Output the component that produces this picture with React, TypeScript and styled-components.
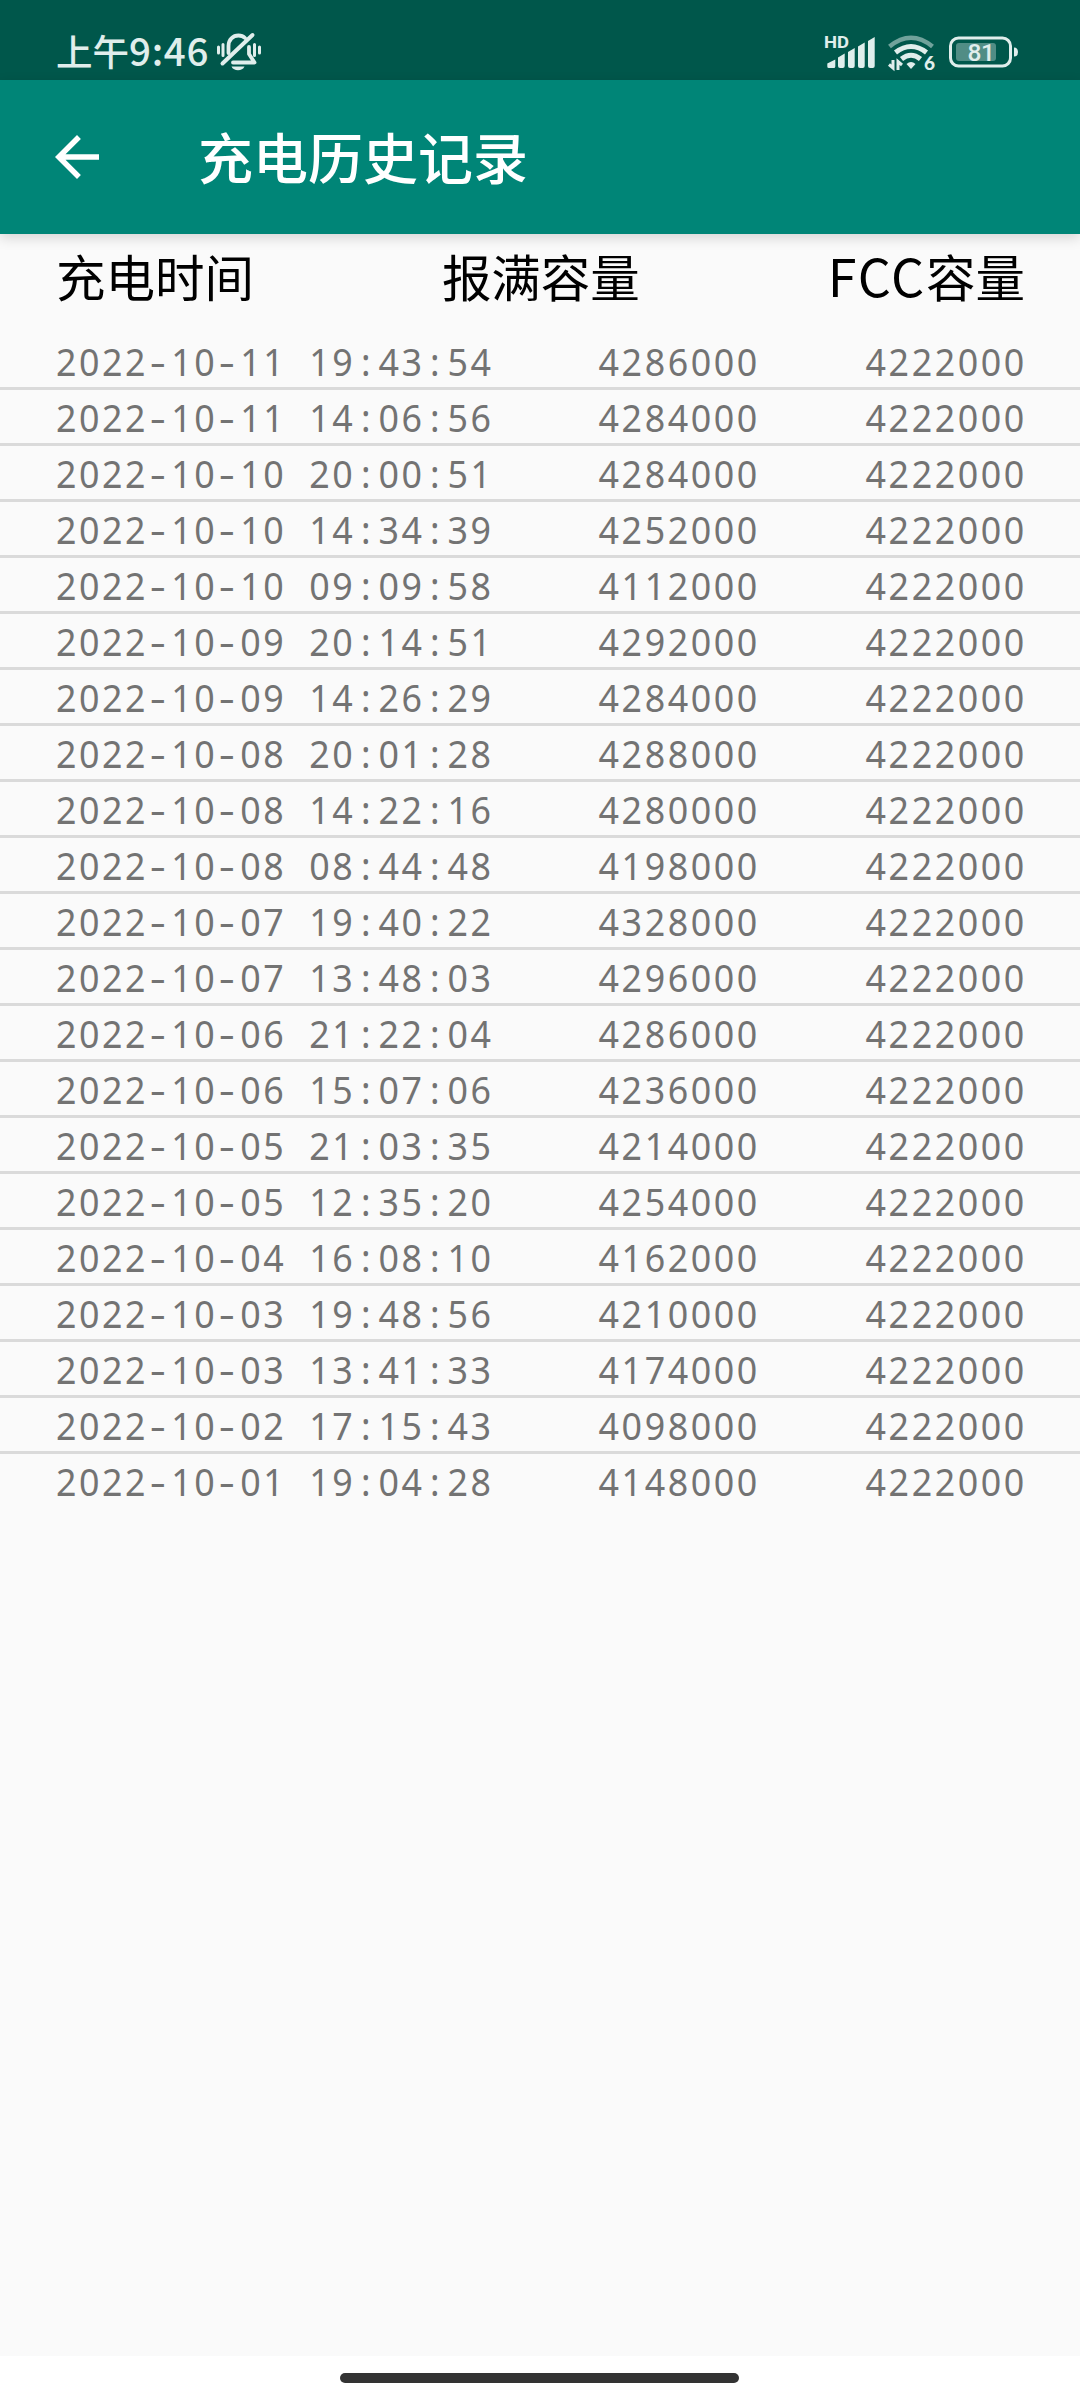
import React from 'react';
import styled, { createGlobalStyle } from 'styled-components';

const Global = createGlobalStyle`
  body { margin: 0; background: #fafafa; }
  * { box-sizing: border-box; }
`;

const cjk = `'Noto Sans CJK SC', sans-serif`;

const Screen = styled.div`
  width: 1080px;
  height: 2400px;
  display: flex;
  flex-direction: column;
  background: #fafafa;
  font-family: ${cjk};
  overflow: hidden;
`;

const StatusBar = styled.div`
  height: 80px;
  flex: none;
  padding: 22px 61px 0 56px;
  display: flex;
  justify-content: space-between;
  align-items: flex-start;
  background: #00574b;
  color: #e0eeec;

  svg { overflow: visible; }
`;

const StatusGroup = styled.div<{ $gap: number }>`
  display: flex;
  align-items: center;
  gap: ${(p) => p.$gap}px;
  height: 60px;
`;

const Clock = styled.span`
  width: 152px;
  font-size: 36.5px;
  line-height: 55px;
  height: 60px;
  font-weight: 500;
  white-space: nowrap;
`;

const ClockDigits = styled.span`
  font-size: 38.5px;
  letter-spacing: 0.7px;
`;

const Toolbar = styled.header`
  height: 154px;
  flex: none;
  display: flex;
  align-items: center;
  padding-left: 44px;
  background: #008577;
  color: #fff;
  box-shadow: 0 4px 12px rgba(0, 0, 0, 0.15);
  z-index: 1;
`;

const BackButton = styled.button`
  width: 66px;
  height: 66px;
  padding: 0;
  border: 0;
  background: none;
  color: inherit;
`;

const Title = styled.h1`
  margin: 0 0 5px 88px;
  font-size: 55px;
  font-weight: 500;
  line-height: 80px;
`;

const HeaderRow = styled.div`
  height: 100px;
  flex: none;
  display: flex;
  justify-content: space-between;
  padding: 5px 55px 0 56px;
  font-size: 49.5px;
  line-height: 74px;
  color: #000;
`;

const Latin = styled.span`
  font-size: 52px;
  line-height: 1;
  letter-spacing: 1.8px;
`;

const List = styled.main`
  flex: 1;
`;

const Row = styled.div`
  height: 56px;
  display: grid;
  grid-template-columns: minmax(0, 1fr) 266px 267px;
  padding: 0 55px 0 56px;
  border-bottom: 3px solid #dadada;
  font-family: 'Noto Sans', sans-serif;
  font-size: 38.5px;
  line-height: 54px;
  color: #737373;
  white-space: nowrap;
  &:last-child { border-bottom: 0; }
`;

const Cell = styled.div<{ $right?: boolean }>`
  text-align: ${(p) => (p.$right ? 'right' : 'left')};
  transform: scaleX(0.93);
  transform-origin: ${(p) => (p.$right ? 'right' : 'left')} center;
`;

const Digits = styled.span`
  letter-spacing: 2.74px;
`;

const LastDigit = styled.span`
  letter-spacing: 0.8px;
`;

const Mark = styled.span<{ $wide?: boolean }>`
  display: inline-block;
  width: 24.76px;
  padding-right: 2.5px;
  text-align: center;
  transform: ${(p) => (p.$wide ? 'scaleX(1.4)' : 'none')};
`;

const NavBar = styled.footer`
  height: 44px;
  flex: none;
  padding-top: 17px;
  background: #fff;
`;

const NavHandle = styled.div`
  width: 399px;
  height: 10px;
  margin: 0 0 0 340px;
  border-radius: 5px;
  background: #333;
`;

const MutedBell = () => (
  <svg width="46" height="40" viewBox="0 0 46 40" fill="none" stroke="currentColor" strokeLinecap="round">
    <path d="M2.500 15v6M7 12.500v11M38.500 12.500v11M43.500 15v6" strokeWidth="3" />
    <path d="M12.500 21V14C12.500 7.500 17 3.500 22.500 3.500C25 3.500 27.500 4.500 29 6M33 15v7l5.500 8.500H17" strokeWidth="3.800" strokeLinejoin="round" />
    <path d="M36.500 3L6.500 31.500" strokeWidth="4" />
    <path d="M15.500 34.500h13c-2 5-11 5-13 0z" fill="currentColor" stroke="none" />
  </svg>
);

const Signal = () => (
  <svg width="52" height="36" viewBox="0 0 52 36" fill="currentColor">
    <text x="1" y="13.500" fontFamily="Roboto, sans-serif" fontWeight="700" fontSize="16" textLength="25" lengthAdjust="spacingAndGlyphs">HD</text>
    <path d="M4.300 29.500l8-4v7a1.500 1.500 0 0 1-1.500 1.500h-5a1.500 1.500 0 0 1-1.500-1.500zM15 23.500l6.700-4v12.500a2 2 0 0 1-2 2h-2.700a2 2 0 0 1-2-2zM25 18l6.700-4v18a2 2 0 0 1-2 2h-2.700a2 2 0 0 1-2-2zM35 12.500l6.700-4v23.500a2 2 0 0 1-2 2h-2.700a2 2 0 0 1-2-2zM45 7l6.700-4v29a2 2 0 0 1-2 2h-2.700a2 2 0 0 1-2-2z" />
  </svg>
);

const Wifi = () => (
  <svg width="48" height="38" viewBox="0 0 48 38" fill="none" stroke="currentColor">
    <path d="M1.500 13.500Q23-4 44.500 13.500" strokeWidth="4.500" opacity=".5" />
    <path d="M7.500 19.500Q23 7.500 38.500 19.500" strokeWidth="5" />
    <path d="M13.500 26Q23 18.500 32.500 26" strokeWidth="5" />
    <path d="M18.500 31q4.500-4 9 0l-4.500 5z" fill="currentColor" stroke="none" />
    <path d="M1 31.500l4 3.500V27M10 37V28.500l4 3.500" strokeWidth="3" />
    <text x="36" y="37" fill="currentColor" stroke="none" fontFamily="Lato, sans-serif" fontWeight="900" fontSize="19">6</text>
  </svg>
);

const Battery = () => (
  <svg width="70" height="32" viewBox="0 0 70 32">
    <rect x="1.500" y="2" width="60" height="28" rx="8" fill="none" stroke="currentColor" strokeWidth="3" />
    <rect x="7" y="7" width="40" height="18" rx="3" fill="currentColor" opacity=".36" />
    <path d="M65 11.500q4 0 4 4.500t-4 4.500z" fill="currentColor" />
    <text x="32" y="24.800" textAnchor="middle" fill="currentColor" fontFamily="Roboto, sans-serif" fontWeight="500" fontSize="24.500" letterSpacing="-0.500">81</text>
  </svg>
);

const records = [
  ['2022-10-11 19:43:54', '4286000'],
  ['2022-10-11 14:06:56', '4284000'],
  ['2022-10-10 20:00:51', '4284000'],
  ['2022-10-10 14:34:39', '4252000'],
  ['2022-10-10 09:09:58', '4112000'],
  ['2022-10-09 20:14:51', '4292000'],
  ['2022-10-09 14:26:29', '4284000'],
  ['2022-10-08 20:01:28', '4288000'],
  ['2022-10-08 14:22:16', '4280000'],
  ['2022-10-08 08:44:48', '4198000'],
  ['2022-10-07 19:40:22', '4328000'],
  ['2022-10-07 13:48:03', '4296000'],
  ['2022-10-06 21:22:04', '4286000'],
  ['2022-10-06 15:07:06', '4236000'],
  ['2022-10-05 21:03:35', '4214000'],
  ['2022-10-05 12:35:20', '4254000'],
  ['2022-10-04 16:08:10', '4162000'],
  ['2022-10-03 19:48:56', '4210000'],
  ['2022-10-03 13:41:33', '4174000'],
  ['2022-10-02 17:15:43', '4098000'],
  ['2022-10-01 19:04:28', '4148000'],
];
const FCC = '4222000';

const Timestamp = ({ value }: { value: string }) => (
  <Cell>
    {value.split(/([-: ])/).map((part, i) =>
      i % 2 === 0 ? (
        <Digits key={i}>{part}</Digits>
      ) : (
        <Mark key={i} $wide={part === '-'}>
          {part === ' ' ? '\u00a0' : part}
        </Mark>
      ),
    )}
  </Cell>
);

const Capacity = ({ value }: { value: string }) => (
  <Cell $right>
    <Digits>{value.slice(0, -1)}</Digits>
    <LastDigit>{value.slice(-1)}</LastDigit>
  </Cell>
);

export default function App() {
  return (
    <Screen>
      <Global />
      <StatusBar>
        <StatusGroup $gap={8}>
          <Clock>
            上午<ClockDigits>9:46</ClockDigits>
          </Clock>
          <MutedBell />
        </StatusGroup>
        <StatusGroup $gap={13}>
          <Signal />
          <Wifi />
          <Battery />
        </StatusGroup>
      </StatusBar>
      <Toolbar>
        <BackButton aria-label="返回">
          <svg width="66" height="66" viewBox="0 0 24 24" fill="currentColor">
            <path d="M20 11H7.830l5.590-5.590L12 4l-8 8 8 8 1.410-1.410L7.830 13H20v-2z" />
          </svg>
        </BackButton>
        <Title>充电历史记录</Title>
      </Toolbar>
      <HeaderRow>
        <span>充电时间</span>
        <span>报满容量</span>
        <span>
          <Latin>FCC</Latin>容量
        </span>
      </HeaderRow>
      <List>
        {records.map(([time, capacity]) => (
          <Row key={time}>
            <Timestamp value={time} />
            <Capacity value={capacity} />
            <Capacity value={FCC} />
          </Row>
        ))}
      </List>
      <NavBar>
        <NavHandle />
      </NavBar>
    </Screen>
  );
}
